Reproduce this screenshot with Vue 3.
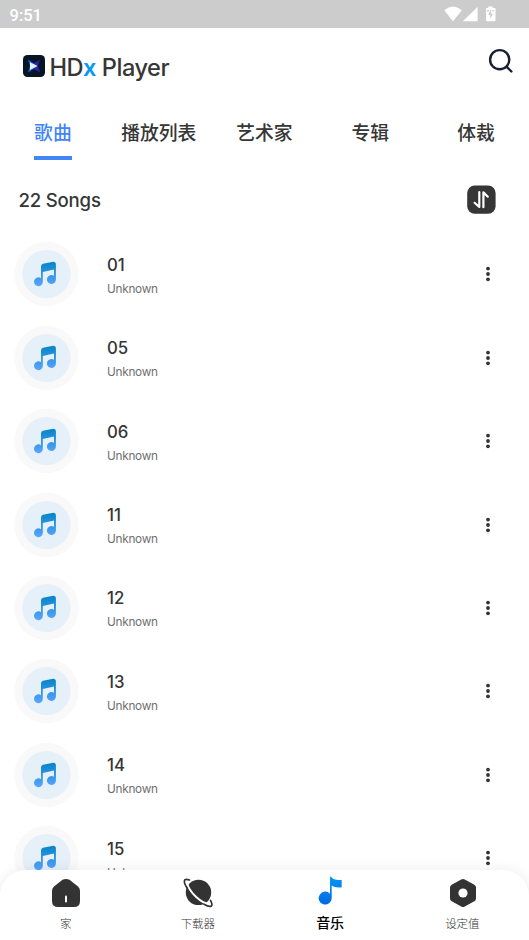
<script setup>
const tabs = ['歌曲', '播放列表', '艺术家', '专辑', '体裁']
const songs = ['01', '05', '06', '11', '12', '13', '14', '15']
const activeTab = 0
</script>

<template>
  <div class="screen">
    <div class="status">
      <span class="time">9:51</span>
      <svg class="status-icons" width="54" height="16" viewBox="0 0 54 16" fill="#fff">
        <path d="M0.3 4.2Q9-3.2 17.8 4.2L9 15.3Z" />
        <path d="M18.8 15.3L33.6 1V15.3Z" />
        <path d="M42.3 2h2V.4h4.3V2h2.2q.7 0 .7.8v11.7q0 .8-.8.8h-7.8q-.8 0-.8-.8V2.8q0-.8.2-.8Z" />
        <path d="M46.5 3.7l-2.2 5.2h1.9v4l2.6-5.4h-1.9V3.7zM43.1 4h1.7v1.4h-1.7zM48.2 4h1.7v1.4h-1.7z" fill="#ccc" />
      </svg>
    </div>

    <header class="header">
      <svg class="logo" width="22" height="22" viewBox="0 0 22 22">
        <defs>
          <linearGradient id="logoX" x1="0" x2="1">
            <stop offset="0" stop-color="#1470e8" />
            <stop offset=".5" stop-color="#2a2fc4" />
            <stop offset="1" stop-color="#35108a" />
          </linearGradient>
        </defs>
        <rect width="22" height="22" rx="4.5" fill="#051523" />
        <path d="M5 4.5L11 8.3 17 4.5 15 11 17.3 17.5 11 14 5 17.5 7 11Z" fill="url(#logoX)" />
        <path d="M7 7.2L14.6 11 7 15Z" fill="#d9f6ff" />
      </svg>
      <h1 class="title">HD<span class="accent">x</span> Player</h1>
      <svg class="search" width="26" height="26" viewBox="0 0 26 26" fill="none" stroke="#172033" stroke-width="2.4" stroke-linecap="round">
        <circle cx="11.7" cy="11.7" r="9.6" />
        <path d="M18.6 18.7L23.4 23.5" />
      </svg>
    </header>

    <nav class="tabs">
      <div v-for="(tab, i) in tabs" :key="tab" class="tab" :class="{ active: i === activeTab }">
        <span>{{ tab }}</span>
      </div>
    </nav>

    <div class="summary">
      <h2>22 Songs</h2>
      <svg class="sort" width="29" height="29" viewBox="0 0 29 29">
        <rect x=".2" y=".6" width="28.4" height="28.2" rx="7.5" fill="#363636" />
        <path d="M12.3 7V22L7.6 17.8M16.4 22.2V7.4L20.8 11.7" fill="none" stroke="#fff" stroke-width="2.2" stroke-linecap="round" stroke-linejoin="round" />
      </svg>
    </div>

    <main class="list">
      <article v-for="song in songs" :key="song" class="song">
        <svg class="cover" width="67" height="66" viewBox="0 0 67 66">
          <defs>
            <linearGradient id="note" gradientUnits="userSpaceOnUse" x1="0" y1="21" x2="0" y2="45">
              <stop offset="0" stop-color="#0584c8" />
              <stop offset="1" stop-color="#5aa4ff" />
            </linearGradient>
          </defs>
          <circle cx="33.5" cy="33" r="32.3" fill="#f9f9f9" />
          <circle cx="33.5" cy="33" r="24.1" fill="#e5f0f9" />
          <path d="M28 40.5V25.4Q28 23.3 30 22.7L39 20.9Q42.9 20.3 42.9 23.6V38.5A4.5 4.5 0 1 1 41 34.8V28.4L29.8 31V40.8A4.4 4.4 0 1 1 28 37.2Z" fill="url(#note)" />
        </svg>
        <div class="meta">
          <div class="name">{{ song }}</div>
          <div class="artist">Unknown</div>
        </div>
        <svg class="more" width="6" height="16" viewBox="0 0 6 16" fill="#333">
          <circle cx="3" cy="2.6" r="1.9" />
          <circle cx="3" cy="8" r="1.9" />
          <circle cx="3" cy="13.3" r="1.9" />
        </svg>
      </article>
    </main>

    <footer class="bottom">
      <div class="item">
        <svg width="30" height="30" viewBox="0 0 30 30">
          <path d="M11.5 1.7Q15 .2 18.5 1.7L27 8.4Q29 10 29 13V23Q29 29 23 29H7Q1 29 1 23V13Q1 10 3 8.4Z" fill="#333" />
          <path d="M15 18.6V23.4" stroke="#fff" stroke-width="2" stroke-linecap="round" />
        </svg>
        <span>家</span>
      </div>
      <div class="item">
        <svg width="30" height="30" viewBox="0 0 30 30">
          <circle cx="15.5" cy="14.4" r="12.7" fill="#333" />
          <path d="M4 4.6C4.8 9.2 8.6 14.6 13.2 19C17.4 22.8 21.6 25.4 25.6 26.2" fill="none" stroke="#fff" stroke-width="2" />
          <path d="M6.5 2Q3.2 .9 2 1.7C.7 3.1 1.7 6.4 4 10M27.5 22.4C29.1 25.2 29.3 27.2 28.3 28C27 29 24 28 21 26.3" fill="none" stroke="#333" stroke-width="1.7" stroke-linecap="round" />
        </svg>
        <span>下载器</span>
      </div>
      <div class="item current">
        <svg width="30" height="30" viewBox="0 0 30 30">
          <defs>
            <linearGradient id="musicTab" x1="0" y1="1" x2="0" y2="0">
              <stop offset="0" stop-color="#006bdf" />
              <stop offset="1" stop-color="#0894f8" />
            </linearGradient>
          </defs>
          <path d="M14 -1.2H15C17 1.8 20.5 2.3 25.7 1.9V9.2C21.7 9.9 18.2 9.3 15.7 7.6V20.2A6.5 6.5 0 1 1 14 15.7Z" fill="url(#musicTab)" />
        </svg>
        <span>音乐</span>
      </div>
      <div class="item">
        <svg width="30" height="30" viewBox="0 0 30 30">
          <path d="M13.2 1.6Q15 .5 16.8 1.6L26.3 6.7Q28 7.6 28 9.5V20.5Q28 22.4 26.3 23.3L16.8 28.4Q15 29.5 13.2 28.4L3.7 23.3Q2 22.4 2 20.5V9.5Q2 7.6 3.7 6.7Z" fill="#333" />
          <circle cx="15" cy="15" r="4.6" fill="#fff" />
        </svg>
        <span>设定值</span>
      </div>
    </footer>
  </div>
</template>

<style>
body {
  overflow: hidden;
  background: #fff;
}
</style>

<style scoped>
.screen {
  position: relative;
  width: 529px;
  height: 940px;
  overflow: hidden;
  background: #fff;
  color: #363636;
  font-family: Inter, "Noto Sans CJK SC", sans-serif;
}
.status {
  display: flex;
  justify-content: space-between;
  align-items: center;
  box-sizing: border-box;
  height: 28px;
  padding: 0 31px 0 9.5px;
  background: #ccc;
}
.time {
  padding-top: 3px;
  color: #fff;
  font: 500 16.5px/20px Roboto, sans-serif;
}
.header {
  display: flex;
  align-items: flex-start;
  box-sizing: border-box;
  height: 77px;
  padding: 20px 15px 0 23px;
}
.logo {
  margin-top: 7px;
}
.title {
  flex: 1;
  margin: 4px 0 0 4.5px;
  font-size: 23.6px;
  font-weight: 500;
  line-height: 32px;
  letter-spacing: -0.5px;
}
.accent {
  color: #0797f5;
  font-weight: 600;
}
.tabs {
  display: grid;
  grid-template-columns: repeat(5, 1fr);
  height: 62px;
}
.tab {
  display: flex;
  justify-content: center;
  align-items: flex-start;
  font: 500 18.8px/28px "Noto Sans CJK SC", sans-serif;
}
.tab span {
  height: 42px;
  padding-top: 13px;
  white-space: nowrap;
}
.tab.active {
  color: #4285f4;
}
.tab.active span {
  border-bottom: 4px solid #4285f4;
  height: 38px;
}
.summary {
  display: flex;
  justify-content: space-between;
  align-items: center;
  height: 65.5px;
  padding: 0 33px 0 18.5px;
}
.summary h2 {
  margin: 1px 0 0;
  font-size: 18.6px;
  font-weight: 500;
  line-height: 26px;
  letter-spacing: -0.2px;
}
.list {
  height: 668px;
}
.song {
  display: flex;
  align-items: center;
  height: 83.45px;
  padding: 0 38.5px 0 13px;
}
.cover {
  flex: none;
}
.meta {
  flex: 1;
  margin: 2px 0 0 27px;
}
.name {
  font-size: 16.8px;
  font-weight: 500;
  line-height: 24px;
}
.artist {
  font-size: 11.8px;
  line-height: 18px;
  margin-top: 3px;
  letter-spacing: -0.28px;
  color: #707070;
}
.bottom {
  position: absolute;
  left: 0;
  bottom: 0;
  display: grid;
  grid-template-columns: repeat(4, 1fr);
  width: 529px;
  height: 70.5px;
  background: #fff;
  border-radius: 26px 26px 0 0;
  box-shadow: 0 0 14px rgba(0, 0, 0, 0.08);
}
.item {
  display: flex;
  flex-direction: column;
  align-items: center;
  padding-top: 8.5px;
  color: #333;
  font: 300 11.5px/18px "Noto Sans CJK SC", sans-serif;
}
.item svg {
  overflow: visible;
}
.item span {
  margin: 6px 1px 0 0;
}
.current {
  color: #000;
  font-size: 14px;
  font-weight: 500;
}
.current span {
  margin-top: 5px;
}
</style>
